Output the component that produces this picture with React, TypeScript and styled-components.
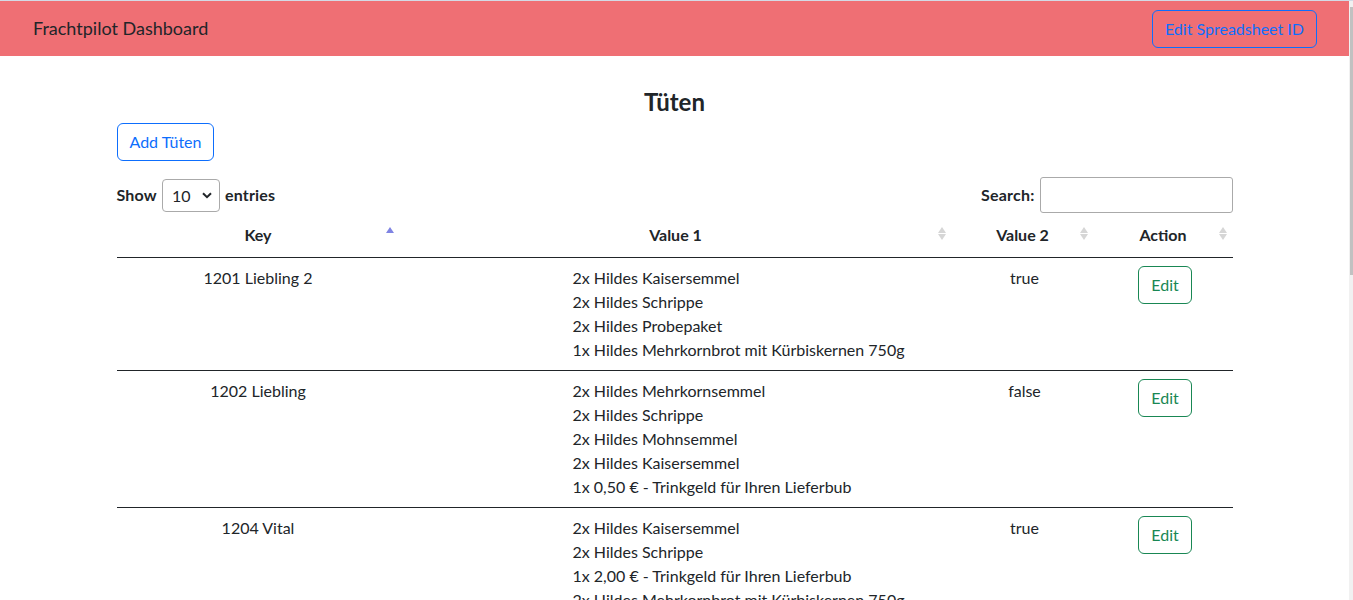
import React from "react";
import styled, { createGlobalStyle } from "styled-components";

const GlobalStyle = createGlobalStyle`
  html, body { margin: 0; padding: 0; overflow: hidden; }
  body {
    font-family: Lato, "Open Sans", sans-serif;
    font-size: 16px;
    line-height: 1.5;
    color: #212529;
    background: #fff;
  }
  * { box-sizing: border-box; }
`;

const Page = styled.div`
  display: flex;
  height: 600px;
  border-top: 1px solid #d3dae6;
`;

const Main = styled.div`
  flex: 1;
  min-width: 0;
  overflow: hidden;
`;

const ScrollTrack = styled.div`
  width: 4px;
  background: #f1f1f1;
  display: flex;
  justify-content: flex-end;
`;

const ScrollThumb = styled.div`
  width: 3px;
  height: 268px;
  margin-top: 6px;
  background: #c1c1c1;
`;

const Navbar = styled.nav`
  height: 55px;
  background: #ef6f74;
  display: flex;
  align-items: center;
  justify-content: space-between;
  padding: 0 32px 0 33px;
`;

const Brand = styled.span`
  font-size: 18px;
  color: #212529;
`;

const OutlineButton = styled.button<{ $color: string }>`
  font-family: inherit;
  font-size: 16px;
  line-height: 24px;
  padding: 6px 12px;
  background: transparent;
  color: ${(p) => p.$color};
  border: 1px solid ${(p) => p.$color};
  border-radius: 6px;
  cursor: pointer;
`;

const Container = styled.div`
  max-width: 1140px;
  margin: 0 auto;
  padding: 31px 12px 0;
`;

const Title = styled.h4`
  margin: 0 0 7px;
  font-size: 24px;
  line-height: 29px;
  font-weight: 700;
  text-align: center;
`;

const Controls = styled.div`
  display: flex;
  justify-content: space-between;
  align-items: center;
  margin-top: 16px;
  height: 36px;
`;

const Label = styled.label`
  display: flex;
  align-items: center;
  gap: 5px;
  font-weight: 700;
  letter-spacing: 0.2px;
`;

const SelectWrap = styled.span`
  position: relative;
  display: inline-flex;
`;

const Select = styled.select`
  appearance: none;
  font-family: inherit;
  font-size: 16px;
  color: #212529;
  width: 58px;
  height: 33px;
  padding: 0 0 0 9px;
  border: 1px solid #aaa;
  border-radius: 4px;
  background: #fff;
`;

const Chevron = styled.svg`
  position: absolute;
  right: 8px;
  top: 13px;
  pointer-events: none;
`;

const SearchInput = styled.input`
  width: 193px;
  height: 36px;
  border: 1px solid #aaa;
  border-radius: 3px;
  padding: 4px 6px;
  font-family: inherit;
  font-size: 16px;
`;

const Table = styled.table`
  width: 100%;
  margin-top: 4px;
  border-collapse: collapse;
  table-layout: fixed;
`;

const Th = styled.th<{ $active?: boolean }>`
  position: relative;
  padding: 6px 8px 10px;
  line-height: 24px;
  font-weight: 700;
  text-align: center;
  border-bottom: 1px solid #212529;

  &::before,
  &::after {
    content: "";
    position: absolute;
    right: 6px;
    width: 0;
    height: 0;
    border-left: 4px solid transparent;
    border-right: 4px solid transparent;
  }
  &::before {
    top: 10px;
    border-bottom: 6px solid ${(p) => (p.$active ? "#7f84e3" : "#d6d6d6")};
  }
  &::after {
    top: 17px;
    border-top: 6px solid ${(p) => (p.$active ? "transparent" : "#d6d6d6")};
  }
`;

const Tr = styled.tr`
  border-bottom: 1px solid #212529;
`;

const Td = styled.td<{ $align?: "center" | "left"; $padLeft?: number }>`
  vertical-align: top;
  padding: 8px;
  padding-left: ${(p) => (p.$padLeft ? `${p.$padLeft}px` : "8px")};
  line-height: 24px;
  text-align: ${(p) => p.$align ?? "center"};
`;

const CenterCell = styled(Td)`
  padding-left: 10px;
  padding-right: 6px;
`;

const Line = styled.div`
  white-space: nowrap;
`;

type Row = { key: string; items: string[]; v2: string };

const rows: Row[] = [
  {
    key: "1201 Liebling 2",
    items: [
      "2x Hildes Kaisersemmel",
      "2x Hildes Schrippe",
      "2x Hildes Probepaket",
      "1x Hildes Mehrkornbrot mit Kürbiskernen 750g",
    ],
    v2: "true",
  },
  {
    key: "1202 Liebling",
    items: [
      "2x Hildes Mehrkornsemmel",
      "2x Hildes Schrippe",
      "2x Hildes Mohnsemmel",
      "2x Hildes Kaisersemmel",
      "1x 0,50 € - Trinkgeld für Ihren Lieferbub",
    ],
    v2: "false",
  },
  {
    key: "1204 Vital",
    items: [
      "2x Hildes Kaisersemmel",
      "2x Hildes Schrippe",
      "1x 2,00 € - Trinkgeld für Ihren Lieferbub",
      "2x Hildes Mehrkornbrot mit Kürbiskernen 750g",
    ],
    v2: "true",
  },
];

export default function App() {
  return (
    <>
      <GlobalStyle />
      <Page>
        <Main>
          <Navbar>
            <Brand>Frachtpilot Dashboard</Brand>
            <OutlineButton $color="#0d6efd">Edit Spreadsheet ID</OutlineButton>
          </Navbar>
          <Container>
            <Title>Tüten</Title>
            <OutlineButton $color="#0d6efd">Add Tüten</OutlineButton>
            <Controls>
              <Label>
                Show
                <SelectWrap>
                  <Select defaultValue="10">
                    <option>10</option>
                    <option>25</option>
                    <option>50</option>
                    <option>100</option>
                  </Select>
                  <Chevron width="10" height="7" viewBox="0 0 10 7">
                    <path d="M1 1.2 L5 5.2 L9 1.2" fill="none" stroke="#212529" strokeWidth="2" />
                  </Chevron>
                </SelectWrap>
                entries
              </Label>
              <Label>
                Search:
                <SearchInput type="search" />
              </Label>
            </Controls>
            <Table>
              <colgroup>
                <col style={{ width: "283px" }} />
                <col style={{ width: "552px" }} />
                <col style={{ width: "142px" }} />
                <col style={{ width: "139px" }} />
              </colgroup>
              <thead>
                <tr>
                  <Th $active>Key</Th>
                  <Th>Value 1</Th>
                  <Th>Value 2</Th>
                  <Th>Action</Th>
                </tr>
              </thead>
              <tbody>
                {rows.map((r) => (
                  <Tr key={r.key}>
                    <Td>{r.key}</Td>
                    <Td $align="left" $padLeft={173}>
                      {r.items.map((it, i) => (
                        <Line key={i}>{it}</Line>
                      ))}
                    </Td>
                    <CenterCell>{r.v2}</CenterCell>
                    <CenterCell>
                      <OutlineButton $color="#198754">Edit</OutlineButton>
                    </CenterCell>
                  </Tr>
                ))}
              </tbody>
            </Table>
          </Container>
        </Main>
        <ScrollTrack>
          <ScrollThumb />
        </ScrollTrack>
      </Page>
    </>
  );
}
